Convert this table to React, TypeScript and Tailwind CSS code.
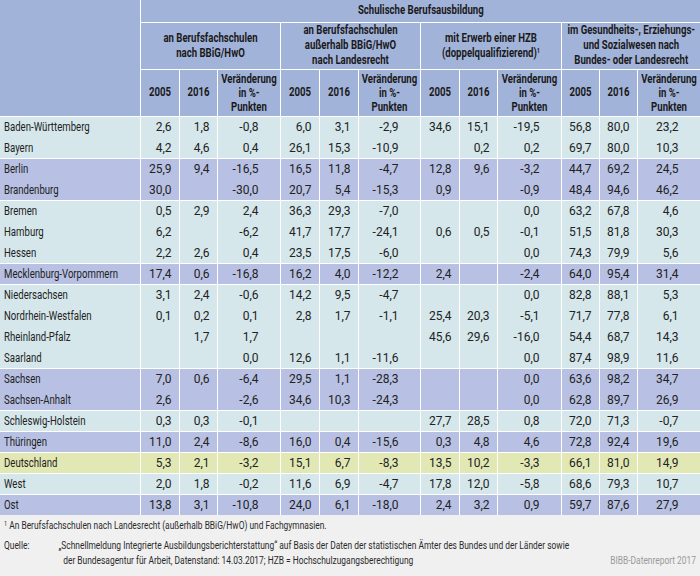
import React from 'react'

type Row = { name: string; v: string[]; tone: 'a' | 'b' | 'd'; sep?: boolean }

const rows: Row[] = [
  { name: 'Baden-Württemberg', tone: 'a', v: ['2,6', '1,8', '-0,8', '6,0', '3,1', '-2,9', '34,6', '15,1', '-19,5', '56,8', '80,0', '23,2'] },
  { name: 'Bayern', tone: 'a', v: ['4,2', '4,6', '0,4', '26,1', '15,3', '-10,9', '', '0,2', '0,2', '69,7', '80,0', '10,3'] },
  { name: 'Berlin', tone: 'b', sep: true, v: ['25,9', '9,4', '-16,5', '16,5', '11,8', '-4,7', '12,8', '9,6', '-3,2', '44,7', '69,2', '24,5'] },
  { name: 'Brandenburg', tone: 'b', v: ['30,0', '', '-30,0', '20,7', '5,4', '-15,3', '0,9', '', '-0,9', '48,4', '94,6', '46,2'] },
  { name: 'Bremen', tone: 'a', sep: true, v: ['0,5', '2,9', '2,4', '36,3', '29,3', '-7,0', '', '', '0,0', '63,2', '67,8', '4,6'] },
  { name: 'Hamburg', tone: 'a', v: ['6,2', '', '-6,2', '41,7', '17,7', '-24,1', '0,6', '0,5', '-0,1', '51,5', '81,8', '30,3'] },
  { name: 'Hessen', tone: 'a', v: ['2,2', '2,6', '0,4', '23,5', '17,5', '-6,0', '', '', '0,0', '74,3', '79,9', '5,6'] },
  { name: 'Mecklenburg-Vorpommern', tone: 'b', sep: true, v: ['17,4', '0,6', '-16,8', '16,2', '4,0', '-12,2', '2,4', '', '-2,4', '64,0', '95,4', '31,4'] },
  { name: 'Niedersachsen', tone: 'a', sep: true, v: ['3,1', '2,4', '-0,6', '14,2', '9,5', '-4,7', '', '', '0,0', '82,8', '88,1', '5,3'] },
  { name: 'Nordrhein-Westfalen', tone: 'a', v: ['0,1', '0,2', '0,1', '2,8', '1,7', '-1,1', '25,4', '20,3', '-5,1', '71,7', '77,8', '6,1'] },
  { name: 'Rheinland-Pfalz', tone: 'a', v: ['', '1,7', '1,7', '', '', '', '45,6', '29,6', '-16,0', '54,4', '68,7', '14,3'] },
  { name: 'Saarland', tone: 'a', v: ['', '', '0,0', '12,6', '1,1', '-11,6', '', '', '0,0', '87,4', '98,9', '11,6'] },
  { name: 'Sachsen', tone: 'b', sep: true, v: ['7,0', '0,6', '-6,4', '29,5', '1,1', '-28,3', '', '', '0,0', '63,6', '98,2', '34,7'] },
  { name: 'Sachsen-Anhalt', tone: 'b', v: ['2,6', '', '-2,6', '34,6', '10,3', '-24,3', '', '', '0,0', '62,8', '89,7', '26,9'] },
  { name: 'Schleswig-Holstein', tone: 'a', sep: true, v: ['0,3', '0,3', '-0,1', '', '', '', '27,7', '28,5', '0,8', '72,0', '71,3', '-0,7'] },
  { name: 'Thüringen', tone: 'b', sep: true, v: ['11,0', '2,4', '-8,6', '16,0', '0,4', '-15,6', '0,3', '4,8', '4,6', '72,8', '92,4', '19,6'] },
  { name: 'Deutschland', tone: 'd', sep: true, v: ['5,3', '2,1', '-3,2', '15,1', '6,7', '-8,3', '13,5', '10,2', '-3,3', '66,1', '81,0', '14,9'] },
  { name: 'West', tone: 'a', sep: true, v: ['2,0', '1,8', '-0,2', '11,6', '6,9', '-4,7', '17,8', '12,0', '-5,8', '68,6', '79,3', '10,7'] },
  { name: 'Ost', tone: 'b', sep: true, v: ['13,8', '3,1', '-10,8', '24,0', '6,1', '-18,0', '2,4', '3,2', '0,9', '59,7', '87,6', '27,9'] },
]

const widths = [140, 39, 38, 63, 39, 39, 62, 39, 38, 64, 38, 38, 63]

const tones = {
  a: 'bg-[#d5e7eb]',
  b: 'bg-[#b8c1e3]',
  d: 'bg-[#e2e8b4]',
}

// the original uses a narrow face; squeeze Roboto horizontally to match its widths
function Head({ lines, lh = 'leading-[15px]' }: { lines: React.ReactNode[]; lh?: string }) {
  return (
    <div className={`flex flex-col items-center [transform:scaleX(0.8)] ${lh}`}>
      {lines.map((l, i) => (
        <span key={i} className="whitespace-nowrap">
          {l}
        </span>
      ))}
    </div>
  )
}

function SubHead() {
  return (
    <>
      <th className="p-0 border-r border-white">
        <Head lines={['2005']} />
      </th>
      <th className="p-0 border-r border-white">
        <Head lines={['2016']} />
      </th>
      <th className="p-0 border-r border-white">
        <Head lines={['Veränderung', 'in %-', 'Punkten']} lh="leading-[14px]" />
      </th>
    </>
  )
}

export default function App() {
  return (
    <div className="w-[700px] h-[576px] bg-[#f0f0f0] text-[#222] overflow-hidden font-['Roboto',sans-serif]">
      <table className="w-[700px] border-collapse table-fixed text-[12px]">
        <colgroup>
          {widths.map((w, i) => (
            <col key={i} style={{ width: w }} />
          ))}
        </colgroup>
        <thead className="bg-[#a2b3d9] text-[#1a1a1a] text-[12px] font-bold">
          <tr>
            <th rowSpan={3} className="p-0 border-r border-white"></th>
            <th colSpan={12} className="p-0 h-[22px] border-b border-white">
              <Head lines={['Schulische Berufsausbildung']} />
            </th>
          </tr>
          <tr>
            <th colSpan={3} className="p-0 h-[47px] border-r border-b border-white">
              <Head lines={['an Berufsfachschulen', 'nach BBiG/HwO']} />
            </th>
            <th colSpan={3} className="p-0 border-r border-b border-white">
              <Head lines={['an Berufsfachschulen', 'außerhalb BBiG/HwO', 'nach Landesrecht']} />
            </th>
            <th colSpan={3} className="p-0 border-r border-b border-white">
              <Head
                lines={[
                  'mit Erwerb einer HZB',
                  <>
                    (doppelqualifizierend)<sup className="text-[7px]">1</sup>
                  </>,
                ]}
              />
            </th>
            <th colSpan={3} className="p-0 border-b border-white">
              <Head lines={['im Gesundheits-, Erziehungs-', 'und Sozialwesen nach', 'Bundes- oder Landesrecht']} />
            </th>
          </tr>
          <tr className="h-[47px] border-b border-white">
            <SubHead />
            <SubHead />
            <SubHead />
            <SubHead />
          </tr>
        </thead>
        <tbody>
          {rows.map((r) => {
            const sep = r.sep ? 'shadow-[inset_0_1px_0_#ffffff]' : ''
            return (
              <tr key={r.name} className={tones[r.tone]}>
                <td className={`h-[21px] p-0 border-r border-white pl-[4px] whitespace-nowrap ${sep}`}>
                  <span className="inline-block origin-left [transform:scaleX(0.8)]">{r.name}</span>
                </td>
                {r.v.map((x, i) => (
                  <td
                    key={i}
                    className={`p-0 border-r border-white text-right ${sep} ${i % 3 === 2 ? 'pr-[21px]' : 'pr-[7px]'}`}
                  >
                    {x}
                  </td>
                ))}
              </tr>
            )
          })}
        </tbody>
      </table>
      <div className="w-[875px] origin-top-left [transform:scaleX(0.8)] px-[5px] pt-[3px] text-[10.5px] leading-[15px] text-[#2a2a2a] whitespace-nowrap">
        <p>
          <sup className="text-[7px]">1</sup> An Berufsfachschulen nach Landesrecht (außerhalb BBiG/HwO) und
          Fachgymnasien.
        </p>
        <div className="flex mt-[5px]">
          <span className="w-[68px] shrink-0">Quelle:</span>
          <div className="flex-1">
            <p>
              „Schnellmeldung Integrierte Ausbildungsberichterstattung“ auf Basis der Daten der statistischen Ämter des
              Bundes und der Länder sowie
            </p>
            <div className="flex justify-between">
              <p className="pl-[6px]">
                der Bundesagentur für Arbeit, Datenstand: 14.03.2017; HZB = Hochschulzugangsberechtigung
              </p>
              <p className="text-[#9a9a9a]">BIBB-Datenreport 2017</p>
            </div>
          </div>
        </div>
      </div>
    </div>
  )
}
